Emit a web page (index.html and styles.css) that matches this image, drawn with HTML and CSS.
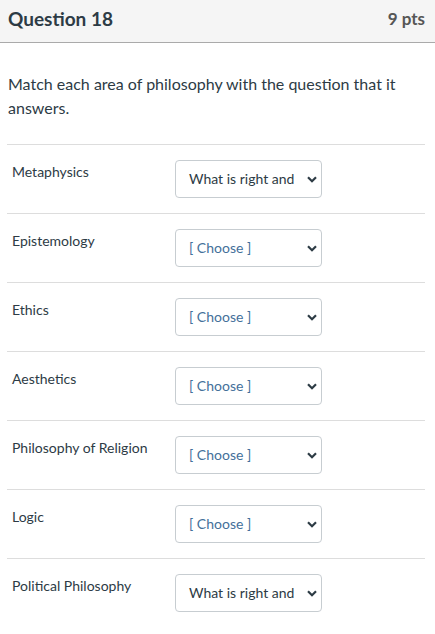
FILE: index.html
```html
<!DOCTYPE html>
<html>
<head>
<meta charset="utf-8">
<link rel="stylesheet" href="styles.css">
</head>
<body>
<div class="header">
  <span class="title">Question 18</span>
  <span class="pts">9 pts</span>
</div>
<div class="question">Match each area of philosophy with the question that it answers.</div>
<div class="rows">
  <div class="row"><div class="label">Metaphysics</div><div class="select"><span class="val">What is right and</span><svg class="chev" width="10" height="7" viewBox="0 0 10 7"><path d="M1 1.2 L5 5.2 L9 1.2" fill="none" stroke="#2d3b45" stroke-width="2.2"/></svg></div></div>
  <div class="row"><div class="label">Epistemology</div><div class="select"><span class="val choose">[ Choose ]</span><svg class="chev" width="10" height="7" viewBox="0 0 10 7"><path d="M1 1.2 L5 5.2 L9 1.2" fill="none" stroke="#2d3b45" stroke-width="2.2"/></svg></div></div>
  <div class="row"><div class="label">Ethics</div><div class="select"><span class="val choose">[ Choose ]</span><svg class="chev" width="10" height="7" viewBox="0 0 10 7"><path d="M1 1.2 L5 5.2 L9 1.2" fill="none" stroke="#2d3b45" stroke-width="2.2"/></svg></div></div>
  <div class="row"><div class="label">Aesthetics</div><div class="select"><span class="val choose">[ Choose ]</span><svg class="chev" width="10" height="7" viewBox="0 0 10 7"><path d="M1 1.2 L5 5.2 L9 1.2" fill="none" stroke="#2d3b45" stroke-width="2.2"/></svg></div></div>
  <div class="row"><div class="label">Philosophy of Religion</div><div class="select"><span class="val choose">[ Choose ]</span><svg class="chev" width="10" height="7" viewBox="0 0 10 7"><path d="M1 1.2 L5 5.2 L9 1.2" fill="none" stroke="#2d3b45" stroke-width="2.2"/></svg></div></div>
  <div class="row"><div class="label">Logic</div><div class="select"><span class="val choose">[ Choose ]</span><svg class="chev" width="10" height="7" viewBox="0 0 10 7"><path d="M1 1.2 L5 5.2 L9 1.2" fill="none" stroke="#2d3b45" stroke-width="2.2"/></svg></div></div>
  <div class="row"><div class="label">Political Philosophy</div><div class="select"><span class="val">What is right and</span><svg class="chev" width="10" height="7" viewBox="0 0 10 7"><path d="M1 1.2 L5 5.2 L9 1.2" fill="none" stroke="#2d3b45" stroke-width="2.2"/></svg></div></div>
</div>
</body>
</html>
```
FILE: styles.css
```css
html, body {
  margin: 0;
  padding: 0;
  background: #fff;
}
body {
  font-family: Lato, "Liberation Sans", sans-serif;
  color: #2d3b45;
}
.header {
  height: 43px;
  box-sizing: border-box;
  background: #f5f5f5;
  border-bottom: 1px solid #aaaaaa;
  display: flex;
  justify-content: space-between;
  align-items: center;
  padding: 0 10px 6px 8px;
}
.title {
  font-size: 19px;
  font-weight: bold;
  color: #2d3b45;
}
.pts {
  font-size: 17px;
  font-weight: bold;
  color: #565656;
}
.question {
  font-size: 16px;
  line-height: 24px;
  margin: 29px 10px 0 8px;
  color: #2d3b45;
}
.rows {
  margin: 24px 10px 0 7px;
}
.row {
  border-top: 1px solid #dddddd;
  display: flex;
  align-items: flex-start;
  padding: 15px 0 15px 5px;
}
.label {
  width: 163px;
  font-size: 14px;
  line-height: 20px;
  padding-top: 2px;
  color: #2d3b45;
}
.select {
  width: 147px;
  height: 38px;
  box-sizing: border-box;
  border: 1px solid #c7cdd1;
  border-radius: 4px;
  background: #fff;
  display: flex;
  align-items: center;
  justify-content: space-between;
  padding: 0 4px 0 13px;
}
.val {
  font-size: 14px;
  line-height: 20px;
  padding-bottom: 1px;
  color: #2d3b45;
  white-space: nowrap;
}
.val.choose {
  color: #44709a;
}
.chev {
  display: block;
  flex: none;
}
```
